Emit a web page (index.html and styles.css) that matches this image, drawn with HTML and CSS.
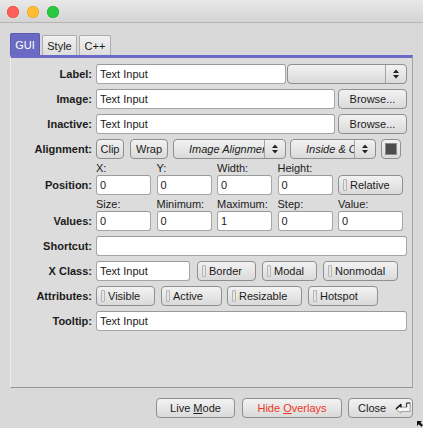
FILE: index.html
```html
<!DOCTYPE html>
<html>
<head>
<meta charset="utf-8">
<link rel="stylesheet" href="styles.css">
</head>
<body>
<div class="window">
  <div class="titlebar">
    <span class="light red"></span>
    <span class="light yellow"></span>
    <span class="light green"></span>
  </div>
  <div class="content">
    <div class="tabs">
      <div class="tab active tab-gui">GUI</div>
      <div class="tab tab-style">Style</div>
      <div class="tab tab-cpp">C++</div>
    </div>
    <div class="panel">
      <div class="row">
        <div class="lbl">Label:</div>
        <div class="input w-label">Text Input</div>
        <div class="btn choice w-labelchoice">
          <span class="choice-text"></span>
          <span class="spin"><svg width="6" height="10" viewBox="0 0 6 10"><path d="M0 4 L3 0.5 L6 4 Z M0 6 L3 9.5 L6 6 Z" fill="#222"/></svg></span>
        </div>
      </div>
      <div class="row">
        <div class="lbl">Image:</div>
        <div class="input w-image">Text Input</div>
        <div class="btn w-browse">Browse...</div>
      </div>
      <div class="row">
        <div class="lbl">Inactive:</div>
        <div class="input w-image">Text Input</div>
        <div class="btn w-browse">Browse...</div>
      </div>
      <div class="row">
        <div class="lbl">Alignment:</div>
        <div class="btn w-clip">Clip</div>
        <div class="btn w-wrap">Wrap</div>
        <div class="btn choice w-imgalign">
          <span class="choice-text italic">Image Alignment</span>
          <span class="spin"><svg width="6" height="10" viewBox="0 0 6 10"><path d="M0 4 L3 0.5 L6 4 Z M0 6 L3 9.5 L6 6 Z" fill="#222"/></svg></span>
        </div>
        <div class="btn choice w-inside">
          <span class="choice-text italic">Inside &amp; Center</span>
          <span class="spin"><svg width="6" height="10" viewBox="0 0 6 10"><path d="M0 4 L3 0.5 L6 4 Z M0 6 L3 9.5 L6 6 Z" fill="#222"/></svg></span>
        </div>
        <div class="btn w-swatch"><span class="swatch"></span></div>
      </div>
      <div class="grow">
        <div class="lbl">Position:</div>
        <div class="cols">
          <div class="cell"><span class="sub">X:</span><div class="input">0</div></div>
          <div class="cell"><span class="sub">Y:</span><div class="input">0</div></div>
          <div class="cell"><span class="sub">Width:</span><div class="input">0</div></div>
          <div class="cell"><span class="sub">Height:</span><div class="input">0</div></div>
          <div class="cell"><div class="btn lightbtn"><span class="ind"></span><span>Relative</span></div></div>
        </div>
      </div>
      <div class="grow">
        <div class="lbl">Values:</div>
        <div class="cols">
          <div class="cell"><span class="sub">Size:</span><div class="input">0</div></div>
          <div class="cell"><span class="sub">Minimum:</span><div class="input">0</div></div>
          <div class="cell"><span class="sub">Maximum:</span><div class="input">1</div></div>
          <div class="cell"><span class="sub">Step:</span><div class="input">0</div></div>
          <div class="cell"><span class="sub">Value:</span><div class="input w-value">0</div></div>
        </div>
      </div>
      <div class="row">
        <div class="lbl">Shortcut:</div>
        <div class="input w-full"></div>
      </div>
      <div class="row">
        <div class="lbl">X Class:</div>
        <div class="input w-xclass">Text Input</div>
        <div class="btn lightbtn w-border"><span class="ind"></span><span>Border</span></div>
        <div class="btn lightbtn w-modal"><span class="ind"></span><span>Modal</span></div>
        <div class="btn lightbtn w-nonmodal"><span class="ind"></span><span>Nonmodal</span></div>
      </div>
      <div class="row">
        <div class="lbl">Attributes:</div>
        <div class="btn lightbtn w-visible"><span class="ind"></span><span>Visible</span></div>
        <div class="btn lightbtn w-active"><span class="ind"></span><span>Active</span></div>
        <div class="btn lightbtn w-resizable"><span class="ind"></span><span>Resizable</span></div>
        <div class="btn lightbtn w-hotspot"><span class="ind"></span><span>Hotspot</span></div>
      </div>
      <div class="row">
        <div class="lbl">Tooltip:</div>
        <div class="input w-full">Text Input</div>
      </div>
    </div>
    <div class="footer">
      <div class="btn w-live"><span>Live <u>M</u>ode</span></div>
      <div class="btn w-hide red-text"><span>Hide <u>O</u>verlays</span></div>
      <div class="btn w-close"><span>Close</span>
        <svg class="ret" width="16" height="12" viewBox="0 0 16 12">
          <path d="M0.8 7 L5.8 2.6 L5.8 5.2 L11.6 5.2 L11.6 1 L15.2 1 L15.2 9.6 L5.8 9.6 L5.8 11.2 Z" fill="#f5f5f5" stroke="#8c8c8c" stroke-width="0.8" stroke-linejoin="round"/>
          <path d="M1 7 L5.8 2.6 L5.8 5.2" fill="none" stroke="#111" stroke-width="1.5" stroke-linejoin="round"/>
          <path d="M11.6 5.2 L11.6 1 L15.2 1" fill="none" stroke="#333" stroke-width="1"/>
        </svg>
      </div>
    </div>
  </div>
  <svg class="grip" width="6" height="7" viewBox="0 0 6 7"><path d="M0 0 L5 0 L3.4 1.6 L6 4.2 L4.4 5.8 L1.8 3.2 L0 5 Z" fill="#111"/></svg>
</div>
</body>
</html>
```

FILE: styles.css
```css
* { box-sizing: border-box; }

body {
  margin: 0;
  font-family: "Liberation Sans", Arial, Helvetica, sans-serif;
  font-size: 11px;
  color: #1b1b1b;
}

.window {
  width: 423px;
  height: 428px;
  background: #d9d9d9;
  position: relative;
  overflow: hidden;
  display: flex;
  flex-direction: column;
}

.titlebar {
  flex: none;
  height: 23px;
  border-bottom: 1px solid #b6b6b6;
  background: linear-gradient(#e8e8e8, #d4d4d4);
  display: flex;
  align-items: center;
  gap: 8px;
  padding-left: 7px;
  padding-top: 1px;
}

.light {
  width: 12px;
  height: 12px;
  border-radius: 50%;
}
.red { background: #fe5f57; box-shadow: inset 0 0 0 0.5px #e2463f; }
.yellow { background: #febc2e; box-shadow: inset 0 0 0 0.5px #dea123; }
.green { background: #28c840; box-shadow: inset 0 0 0 0.5px #1aab29; }

.content {
  padding: 10px 10px 0 10px;
  display: flex;
  flex-direction: column;
}

.tabs {
  display: flex;
  align-items: flex-end;
  gap: 2px;
  height: 22px;
}

.tab {
  height: 20px;
  border: 1px solid #acacac;
  border-bottom: none;
  border-radius: 2px 2px 0 0;
  background: linear-gradient(#f1f1f1, #dddddd);
  display: flex;
  align-items: center;
  justify-content: center;
  padding-top: 1px;
}
.tab.active {
  height: 22px;
  background: #6a6ac3;
  border-color: #5b5bb3;
  color: #ffffff;
}
.tab-gui { width: 30px; }
.tab-style { width: 35px; }
.tab-cpp { width: 32px; }

.panel {
  height: 333px;
  border-top: 3px solid #6b6bc7;
  border-left: 1px solid #ececec;
  border-right: 1px solid #a4a4a4;
  border-bottom: 1px solid #959595;
  background: #dcdcdc;
  padding: 6px 5px 0 0;
  display: flex;
  flex-direction: column;
}

.row {
  display: flex;
  align-items: center;
  height: 20px;
  margin-top: 5px;
}
.row:first-child { margin-top: 0; }

.lbl {
  width: 81px;
  flex: none;
  margin-right: 4px;
  height: 20px;
  display: flex;
  align-items: center;
  justify-content: flex-end;
  font-weight: bold;
}

.input {
  height: 20px;
  flex: none;
  background: #ffffff;
  border: 1px solid #a6a6a6;
  border-top-color: #9a9a9a;
  border-radius: 3px;
  padding-left: 3px;
  display: flex;
  align-items: center;
  white-space: nowrap;
  overflow: hidden;
}

.btn {
  height: 20px;
  flex: none;
  border: 1px solid #8f8f8f;
  border-radius: 4px;
  background: linear-gradient(#f2f2f2, #dadada);
  display: flex;
  align-items: center;
  justify-content: center;
  white-space: nowrap;
}

.choice {
  justify-content: flex-start;
  padding: 0;
  overflow: hidden;
}
.choice-text {
  flex: 1;
  min-width: 0;
  overflow: hidden;
  white-space: nowrap;
  padding-left: 15px;
}
.italic { font-style: italic; }
.spin {
  flex: none;
  width: 21px;
  height: 100%;
  border-left: 1px solid #a3a3a3;
  display: flex;
  align-items: center;
  justify-content: center;
}

.w-label { width: 190px; margin-right: 1px; }
.w-labelchoice { width: 120px; }
.w-image { width: 239px; margin-right: 3px; }
.w-browse { width: 69px; }

.w-clip { width: 28px; margin-right: 6px; }
.w-wrap { width: 38px; margin-right: 5px; }
.w-imgalign { width: 113px; margin-right: 4px; }
.w-inside { width: 86px; margin-right: 5px; }
.w-swatch { width: 20px; }
.swatch {
  width: 12px;
  height: 12px;
  background: #4d4d4d;
  border: 1px solid #8a8a8a;
}

.grow {
  display: flex;
  align-items: flex-end;
  margin-top: 3px;
}
.cols {
  display: grid;
  grid-template-columns: 55px 55px 55px 55px 65px;
  column-gap: 5.5px;
  align-items: end;
}
.cell {
  display: flex;
  flex-direction: column;
  gap: 1px;
}
.sub {
  height: 12px;
  line-height: 12px;
}
.cell .input { width: 100%; }

.lightbtn {
  justify-content: flex-start;
  padding-left: 4px;
  gap: 3px;
}
.ind {
  width: 4px;
  height: 12px;
  background: #e6e6e6;
  border: 1px solid #b4b4b4;
  border-radius: 1px;
}

.w-full { width: 311px; }
.w-xclass { width: 94px; margin-right: 7px; }
.w-border { width: 59px; margin-right: 6px; }
.w-modal { width: 55px; margin-right: 6px; }
.w-nonmodal { width: 75px; }

.w-visible { width: 59px; margin-right: 6px; }
.w-active { width: 61px; margin-right: 5px; }
.w-resizable { width: 75px; margin-right: 6px; }
.w-hotspot { width: 70px; }

.footer {
  margin-top: 10px;
  display: flex;
  justify-content: flex-end;
}
.w-live { width: 79px; margin-right: 7px; }
.w-hide { width: 100px; margin-right: 6px; }
.w-close {
  width: 65px;
  justify-content: flex-start;
  padding-left: 9px;
  gap: 9px;
}
.red-text { color: #f0361f; }
u { text-decoration-thickness: 1px; text-underline-offset: 1px; }

.grip {
  position: absolute;
  right: 0;
  bottom: 0;
}
```
